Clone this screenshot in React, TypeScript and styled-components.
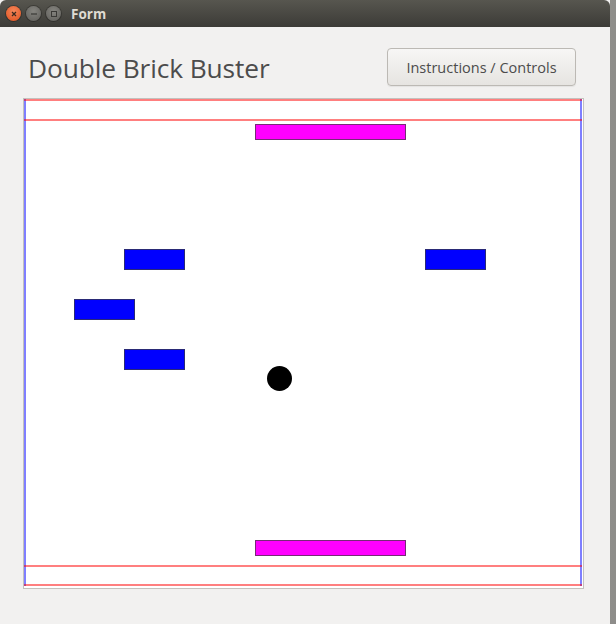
import styled, { createGlobalStyle } from "styled-components";

const GlobalStyle = createGlobalStyle`
  html, body {
    margin: 0;
    padding: 0;
    background: #9a9996;
  }
  body {
    font-family: "Open Sans", "Noto Sans", sans-serif;
  }
`;

const Screen = styled.div`
  width: 616px;
  height: 624px;
  display: flex;
  background: linear-gradient(to right, #a9a8a5, #8e8d8a);
  overflow: hidden;
`;

const Window = styled.div`
  width: 610px;
  height: 624px;
  display: flex;
  flex-direction: column;
  background: #f2f1f0;
`;

const TitleBar = styled.div`
  height: 27px;
  flex-shrink: 0;
  display: flex;
  align-items: center;
  padding-left: 6px;
  gap: 5px;
  background: linear-gradient(to bottom, #57564f, #3c3b37);
  border-top-right-radius: 6px;
  border-top-left-radius: 6px;
`;

const WinButton = styled.div<{ $close?: boolean }>`
  width: 15px;
  height: 15px;
  border-radius: 50%;
  display: flex;
  align-items: center;
  justify-content: center;
  background: ${(p) =>
    p.$close
      ? "radial-gradient(circle at 50% 35%, #f5875a, #e0501e)"
      : "radial-gradient(circle at 50% 35%, #85847f, #5f5e5a)"};
  box-shadow: 0 0 0 1px rgba(0, 0, 0, 0.25);
`;

const TitleText = styled.span`
  margin-left: 5px;
  font-family: "Open Sans", sans-serif;
  font-weight: 700;
  font-size: 13.5px;
  color: #dfdbd2;
`;

const Body = styled.div`
  flex: 1;
  display: flex;
  flex-direction: column;
  padding: 21px 26px 0 23px;
`;

const Header = styled.div`
  display: flex;
  align-items: center;
  justify-content: space-between;
  height: 38px;
  padding-left: 5px;
  padding-right: 8px;
`;

const Heading = styled.h1`
  margin: 0;
  padding-top: 2px;
  font-family: "Open Sans", sans-serif;
  font-weight: 400;
  font-size: 26.3px;
  letter-spacing: -0.1px;
  color: #4c4c4c;
  line-height: 38px;
`;

const PlainButton = styled.button`
  width: 189px;
  height: 38px;
  border: 1px solid #bcb9b4;
  border-radius: 4px;
  background: linear-gradient(to bottom, #f7f6f5, #e6e4e1);
  box-shadow: 0 1px 1px rgba(0, 0, 0, 0.06);
  font-family: "Open Sans", sans-serif;
  font-size: 14.5px;
  color: #4c4c4c;
  padding: 0;
`;

const Field = styled.div`
  margin-top: 12px;
  width: 559px;
  height: 489px;
  border: 1px solid #c3c1bd;
  background: #ffffff;
  position: relative;
  overflow: hidden;
`;

const HLine = styled.div<{ $y: number }>`
  position: absolute;
  left: 0;
  top: ${(p) => p.$y}px;
  width: 558px;
  height: 2px;
  background: rgba(255, 0, 0, 0.5);
`;

const VLine = styled.div<{ $x: number }>`
  position: absolute;
  top: 0;
  left: ${(p) => p.$x}px;
  width: 2px;
  height: 487px;
  background: rgba(0, 0, 255, 0.5);
`;

const Block = styled.div<{ $x: number; $y: number; $w: number; $h: number; $color: string }>`
  position: absolute;
  left: ${(p) => p.$x}px;
  top: ${(p) => p.$y}px;
  width: ${(p) => p.$w}px;
  height: ${(p) => p.$h}px;
  box-sizing: border-box;
  background: ${(p) => p.$color};
  border: 1px solid rgba(60, 60, 60, 0.7);
`;

const Ball = styled.div<{ $x: number; $y: number; $r: number }>`
  position: absolute;
  left: ${(p) => p.$x - p.$r}px;
  top: ${(p) => p.$y - p.$r}px;
  width: ${(p) => p.$r * 2}px;
  height: ${(p) => p.$r * 2}px;
  border-radius: 50%;
  background: #000;
`;

const bricks = [
  { x: 100, y: 150 },
  { x: 50, y: 200 },
  { x: 100, y: 250 },
  { x: 401, y: 150 },
];

const paddles = [{ y: 25 }, { y: 441 }];

export default function App() {
  return (
    <>
      <GlobalStyle />
      <Screen>
        <Window>
          <TitleBar>
            <WinButton $close>
              <svg width="8" height="8" viewBox="0 0 8 8">
                <path d="M2 2 L6 6 M6 2 L2 6" stroke="#3c2a20" strokeWidth="1.3" />
              </svg>
            </WinButton>
            <WinButton>
              <svg width="8" height="8" viewBox="0 0 8 8">
                <path d="M1 4 H7" stroke="#3a3936" strokeWidth="1.2" />
              </svg>
            </WinButton>
            <WinButton>
              <svg width="8" height="8" viewBox="0 0 8 8">
                <rect x="1.5" y="1.5" width="5" height="5" fill="none" stroke="#3a3936" strokeWidth="1" />
              </svg>
            </WinButton>
            <TitleText>Form</TitleText>
          </TitleBar>
          <Body>
            <Header>
              <Heading>Double Brick Buster</Heading>
              <PlainButton>Instructions / Controls</PlainButton>
            </Header>
            <Field>
              <VLine $x={0} />
              <VLine $x={556} />
              <HLine $y={0} />
              <HLine $y={20} />
              <HLine $y={466} />
              <HLine $y={485} />
              {paddles.map((p, i) => (
                <Block key={i} $x={231} $y={p.y} $w={151} $h={16} $color="#ff00ff" />
              ))}
              {bricks.map((b, i) => (
                <Block key={i} $x={b.x} $y={b.y} $w={61} $h={21} $color="#0000ff" />
              ))}
              <Ball $x={255} $y={279} $r={12.5} />
            </Field>
          </Body>
        </Window>
      </Screen>
    </>
  );
}
